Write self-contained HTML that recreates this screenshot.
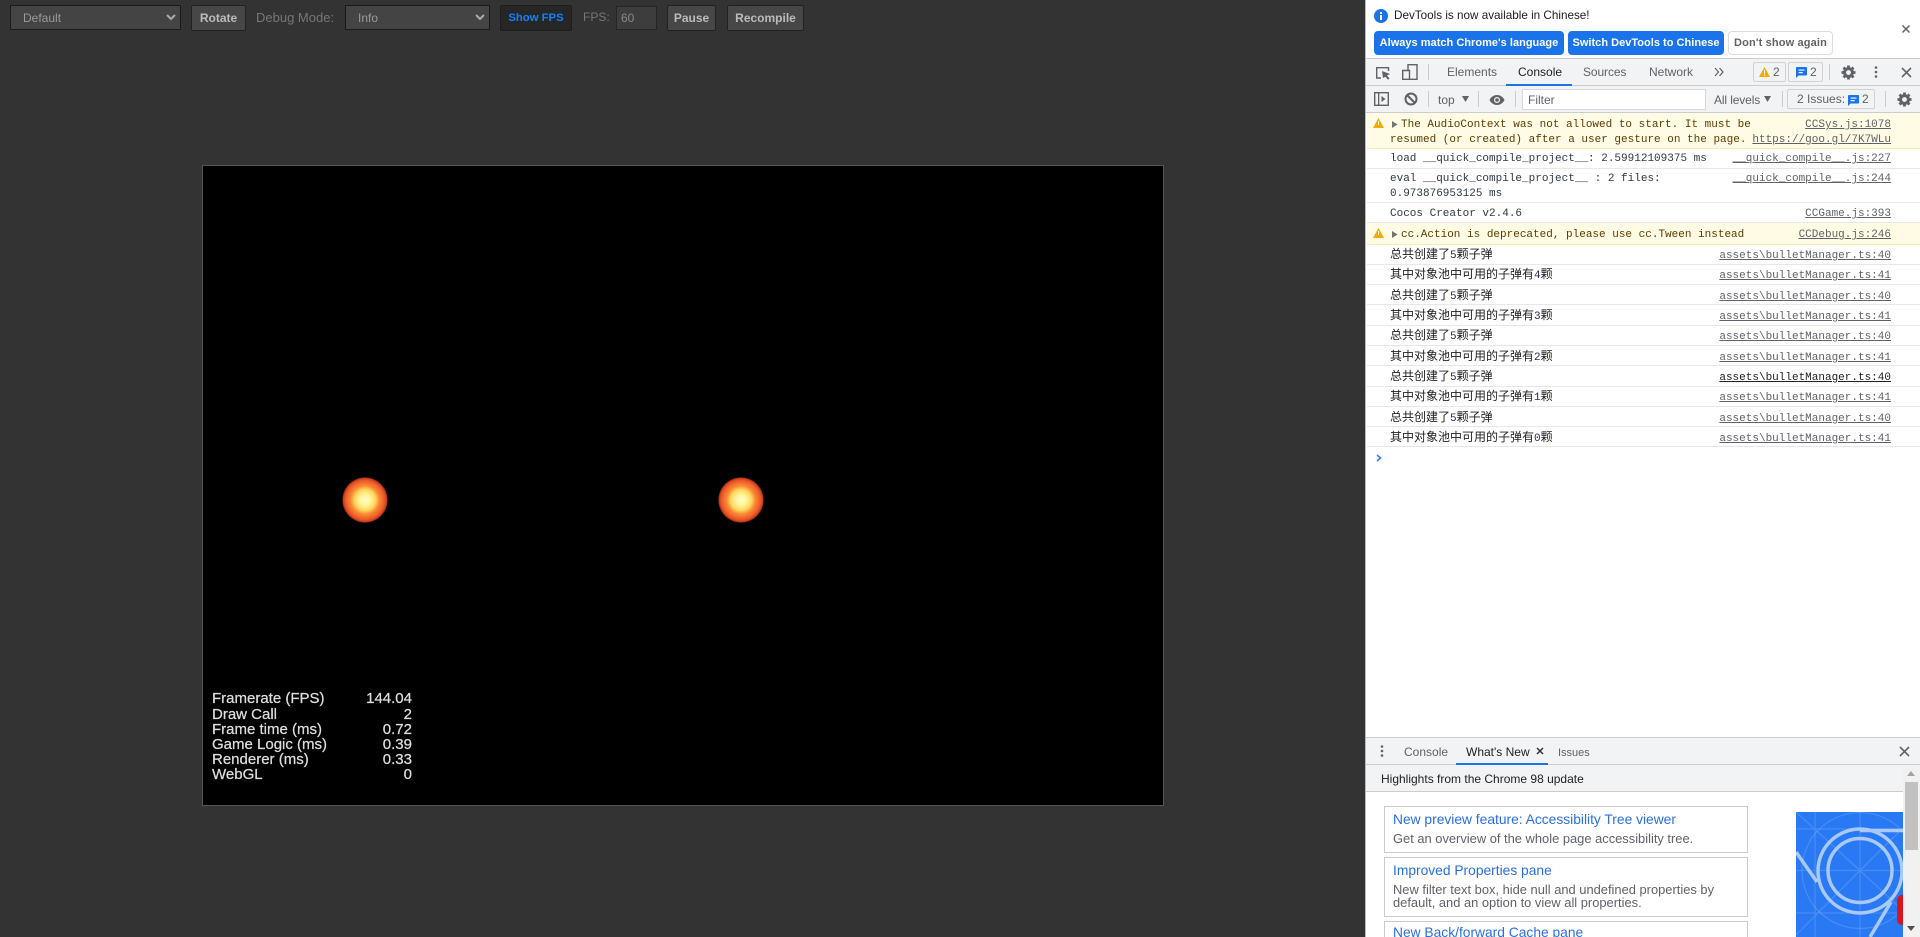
<!DOCTYPE html>
<html><head><meta charset="utf-8"><title>Cocos</title>
<style>
html,body{margin:0;padding:0;width:1920px;height:937px;overflow:hidden;background:#333}
*{box-sizing:border-box}
#w{position:relative;width:1920px;height:937px;overflow:hidden;background:#333}
.a{position:absolute;white-space:nowrap}
.tb{font-family:"Liberation Sans",sans-serif;font-size:13px;height:26px;line-height:25px;color:#999}
.sel{top:5px;height:25px;background:#444;border:1px solid #1a1a1a;color:#9a9a9a;padding-left:12px;line-height:24px;font-size:12px;font-family:"Liberation Sans",sans-serif}
.btn{top:5px;height:26px;background:#474747;border:1px solid #222;border-radius:2px;color:#bbb;font-weight:bold;text-align:center;line-height:24px;font-size:12px;font-family:"Liberation Sans",sans-serif}
.ui{font-family:"Liberation Sans",sans-serif;font-size:12px;color:#333}
.bb{font-size:11px;font-weight:bold;letter-spacing:.02px;text-align:center}
.row{left:1367px;width:553px;border-bottom:1px solid #e8e8e8;background:#fff}
.y{background:#fffbe5;border-bottom:1px solid #f5e9b8}
.m{font-family:"Liberation Mono","Noto Sans CJK SC",monospace;font-size:11px;color:#303942;line-height:14px}
.c{font-family:"Liberation Mono","Noto Sans CJK SC",monospace;font-size:12px;color:#222;line-height:14px}
.c span{font-size:11px;color:#2a2a55}
.l{font-family:"Liberation Mono",monospace;font-size:11px;color:#5f6368;text-decoration:underline;line-height:14px;right:29px}
.st{font-family:"Liberation Sans",sans-serif;font-size:15px;line-height:15px;color:#ddd;-webkit-text-stroke:.25px #ddd}
.v{left:300px;width:112px;text-align:right}
.card{left:1384px;width:364px;border:1px solid #c8ccd2;background:#fff}
.t{left:1393px;font-family:"Liberation Sans",sans-serif;font-size:13.8px;line-height:16px;color:#2a6fe0}
.d{left:1393px;font-family:"Liberation Sans",sans-serif;font-size:12.9px;line-height:14px;color:#5f6368}
.div{width:1px;background:#ccc}
.ball{width:46px;height:46px;top:477px;border-radius:50%;background:radial-gradient(circle closest-side at 50% 50%,#fffcc0 0,#fff6a0 22%,#ffd55a 46%,#fb8a33 62%,#ee5a2a 84%,#c63a1a 95%,#000 100%)}
</style></head><body><div id="w">

<div class="a sel" style="left:10px;width:171px">Default</div>
<svg class="a" style="left:165px;top:13px" width="12" height="10"><path d="M2 2l4 4 4-4" fill="none" stroke="#aaa" stroke-width="2"/></svg>
<div class="a btn" style="left:191px;width:55px">Rotate</div>
<div class="a tb" style="left:256px;top:5px;color:#777">Debug Mode:</div>
<div class="a sel" style="left:345px;width:145px">Info</div>
<svg class="a" style="left:474px;top:13px" width="12" height="10"><path d="M2 2l4 4 4-4" fill="none" stroke="#aaa" stroke-width="2"/></svg>
<div class="a btn" style="left:500px;width:72px;background:#262626;border-color:#1e1e1e;color:#0a84ff;font-size:11.3px">Show FPS</div>
<div class="a tb" style="left:583px;top:5px;color:#777;font-size:12px">FPS:</div>
<div class="a sel" style="left:616px;top:6px;height:24px;width:41px;padding-left:4px;background:#3d3d3d;border-color:#252525;color:#888;line-height:23px">60</div>
<div class="a btn" style="left:667px;width:49px">Pause</div>
<div class="a btn" style="left:727px;width:77px">Recompile</div>

<div class="a" style="left:202px;top:165px;width:962px;height:641px;background:#000;border:1px solid #555"></div>
<div class="a ball" style="left:342px"></div>
<div class="a ball" style="left:718px"></div>

<div class="a st" style="left:212px;top:691px">Framerate (FPS)</div><div class="a st v" style="top:691px">144.04</div>
<div class="a st" style="left:212px;top:707px">Draw Call</div><div class="a st v" style="top:707px">2</div>
<div class="a st" style="left:212px;top:722px">Frame time (ms)</div><div class="a st v" style="top:722px">0.72</div>
<div class="a st" style="left:212px;top:737px">Game Logic (ms)</div><div class="a st v" style="top:737px">0.39</div>
<div class="a st" style="left:212px;top:752px">Renderer (ms)</div><div class="a st v" style="top:752px">0.33</div>
<div class="a st" style="left:212px;top:767px">WebGL</div><div class="a st v" style="top:767px">0</div>

<div class="a" style="left:1365px;top:0;width:555px;height:937px;background:#fff;border-left:1px solid #bbb"></div>

<!-- infobar -->
<svg class="a" style="left:1374px;top:9px" width="14" height="14"><circle cx="7" cy="7" r="7" fill="#1a73e8"/><rect x="6" y="6" width="2" height="5" fill="#fff"/><rect x="6" y="3" width="2" height="2" fill="#fff"/></svg>
<div class="a ui" style="left:1394px;top:8px;line-height:15px;color:#202124;font-size:11.7px">DevTools is now available in Chinese!</div>
<div class="a ui bb" style="left:1374px;top:31px;width:190px;height:24px;background:#1a73e8;border-radius:4px;color:#fff;line-height:24px">Always match Chrome's language</div>
<div class="a ui bb" style="left:1568px;top:31px;width:156px;height:24px;background:#1a73e8;border-radius:4px;color:#fff;line-height:24px">Switch DevTools to Chinese</div>
<div class="a ui bb" style="left:1728px;top:31px;width:105px;height:24px;border:1px solid #dadce0;border-radius:4px;color:#5f6368;line-height:22px;letter-spacing:.15px">Don't show again</div>
<svg class="a" style="left:1901px;top:24px" width="10" height="10"><path d="M1.500 1.500l7 7M8.500 1.500l-7 7" stroke="#5f6368" stroke-width="1.500"/></svg>

<!-- main toolbar -->
<div class="a" style="left:1366px;top:58px;width:554px;height:28px;background:#f1f3f4;border-top:1px solid #cbcdd1;border-bottom:1px solid #cbcdd1"></div>
<svg class="a" style="left:1375px;top:65px" width="18" height="16"><path d="M6 13H1.700V2.700H13.500V6" fill="none" stroke="#5f6368" stroke-width="1.400"/><path d="M7 6l8 3-3 1.500 2.500 3-1.500 1.200-2.500-3L8 13z" fill="#5f6368"/></svg>
<svg class="a" style="left:1402px;top:64px" width="16" height="16"><path d="M6 6V.7h9v14.600H.7V6.500H7.500v8.800" fill="none" stroke="#5f6368" stroke-width="1.400"/></svg>
<div class="a div" style="left:1428px;top:64px;height:16px"></div>
<div class="a ui" style="left:1447px;top:64px;line-height:16px;color:#5f6368">Elements</div>
<div class="a ui" style="left:1518px;top:64px;line-height:16px;color:#202124">Console</div>
<div class="a" style="left:1506px;top:84px;width:66px;height:2px;background:#1a73e8"></div>
<div class="a ui" style="left:1583px;top:64px;line-height:16px;color:#5f6368;letter-spacing:-.1px">Sources</div>
<div class="a ui" style="left:1649px;top:64px;line-height:16px;color:#5f6368">Network</div>
<svg class="a" style="left:1714px;top:67px" width="10" height="10"><path d="M1 1l3.500 4L1 9M5.500 1L9 5 5.500 9" fill="none" stroke="#5f6368" stroke-width="1.200"/></svg>
<div class="a" style="left:1753px;top:62px;width:33px;height:20px;border:1px solid #d0d2d6;border-radius:2px"></div>
<svg class="a" style="left:1759px;top:67px" width="11" height="10"><path d="M5.500 0L11 10H0z" fill="#f2ab00"/><rect x="5" y="3" width="1.100" height="3.800" fill="#fff"/><rect x="5" y="7.500" width="1.100" height="1.200" fill="#fff"/></svg>
<div class="a ui" style="left:1773px;top:64px;line-height:16px;color:#5f6368">2</div>
<div class="a" style="left:1788px;top:62px;width:35px;height:20px;border:1px solid #d0d2d6;border-radius:2px"></div>
<svg class="a" style="left:1796px;top:67px" width="11" height="11" viewBox="0 0 13 13"><path d="M1 0h11a1 1 0 0 1 1 1v8a1 1 0 0 1-1 1H3l-3 3V1a1 1 0 0 1 1-1z" fill="#1a73e8"/><rect x="3" y="3" width="7" height="1.300" fill="#fff"/><rect x="3" y="6" width="5" height="1.300" fill="#fff"/></svg>
<div class="a ui" style="left:1810px;top:64px;line-height:16px;color:#5f6368">2</div>
<div class="a div" style="left:1829px;top:64px;height:16px"></div>
<svg class="a" style="left:1841px;top:65px" width="15" height="15" viewBox="0 0 16 16"><circle cx="8" cy="8" r="4.200" fill="none" stroke="#5f6368" stroke-width="3.200"/><path d="M8 .5V3M8 13v2.500M.5 8H3M13 8h2.500M2.700 2.700l1.800 1.800M11.500 11.500l1.800 1.800M13.300 2.700l-1.800 1.800M4.500 11.500l-1.800 1.800" stroke="#5f6368" stroke-width="3"/></svg>
<svg class="a" style="left:1874px;top:66px" width="4" height="12"><circle cx="2" cy="1.500" r="1.300" fill="#5f6368"/><circle cx="2" cy="6" r="1.300" fill="#5f6368"/><circle cx="2" cy="10.500" r="1.300" fill="#5f6368"/></svg>
<svg class="a" style="left:1901px;top:67px" width="11" height="11"><path d="M1 1l9 9M10 1L1 10" stroke="#5f6368" stroke-width="1.600"/></svg>

<!-- filter bar -->
<div class="a" style="left:1366px;top:86px;width:554px;height:27px;background:#f1f3f4;border-bottom:1px solid #cbcdd1"></div>
<svg class="a" style="left:1374px;top:92px" width="15" height="14"><rect x=".7" y=".7" width="13.600" height="12.600" fill="none" stroke="#5f6368" stroke-width="1.400"/><rect x="4" y="1" width="1.300" height="12" fill="#5f6368"/><path d="M7.500 4l4 3-4 3z" fill="#5f6368"/></svg>
<svg class="a" style="left:1404px;top:92px" width="14" height="14"><circle cx="7" cy="7" r="5.500" fill="none" stroke="#5f6368" stroke-width="2"/><path d="M3 3l8 8" stroke="#5f6368" stroke-width="2"/></svg>
<div class="a div" style="left:1428px;top:91px;height:16px"></div>
<div class="a ui" style="left:1438px;top:92px;line-height:16px;color:#5f6368">top</div>
<svg class="a" style="left:1462px;top:96px" width="7" height="6"><path d="M0 0h7L3.500 6z" fill="#5f6368"/></svg>
<div class="a div" style="left:1478px;top:91px;height:16px"></div>
<svg class="a" style="left:1489px;top:94px" width="16" height="12"><path d="M8 1C4.500 1 1.800 3.200.5 6c1.300 2.800 4 5 7.500 5s6.200-2.200 7.500-5C14.200 3.200 11.500 1 8 1z" fill="#5f6368"/><circle cx="8" cy="6" r="3" fill="#f1f3f4"/><circle cx="8" cy="6" r="1.800" fill="#5f6368"/></svg>
<div class="a div" style="left:1515px;top:91px;height:16px"></div>
<div class="a ui" style="left:1522px;top:89px;width:184px;height:21px;background:#fff;border:1px solid #d6d8db;padding-left:5px;line-height:20px;color:#5f6368">Filter</div>
<div class="a ui" style="left:1714px;top:92px;line-height:16px;color:#5f6368;letter-spacing:-.12px">All levels</div>
<svg class="a" style="left:1764px;top:96px" width="7" height="6"><path d="M0 0h7L3.500 6z" fill="#5f6368"/></svg>
<div class="a div" style="left:1782px;top:91px;height:16px"></div>
<div class="a" style="left:1787px;top:89px;width:88px;height:20px;border:1px solid #d0d2d6;border-radius:2px"></div>
<div class="a ui" style="left:1797px;top:91px;line-height:16px;color:#5f6368">2 Issues:</div>
<svg class="a" style="left:1848px;top:95px" width="11" height="11" viewBox="0 0 13 13"><path d="M1 0h11a1 1 0 0 1 1 1v8a1 1 0 0 1-1 1H3l-3 3V1a1 1 0 0 1 1-1z" fill="#1a73e8"/><rect x="3" y="3" width="7" height="1.300" fill="#fff"/><rect x="3" y="6" width="5" height="1.300" fill="#fff"/></svg>
<div class="a ui" style="left:1862px;top:91px;line-height:16px;color:#5f6368">2</div>
<div class="a div" style="left:1885px;top:91px;height:16px"></div>
<svg class="a" style="left:1897px;top:92px" width="15" height="15" viewBox="0 0 16 16"><circle cx="8" cy="8" r="4.200" fill="none" stroke="#5f6368" stroke-width="3.200"/><path d="M8 .5V3M8 13v2.500M.5 8H3M13 8h2.500M2.700 2.700l1.800 1.800M11.500 11.500l1.800 1.800M13.300 2.700l-1.800 1.800M4.500 11.500l-1.800 1.800" stroke="#5f6368" stroke-width="3"/></svg>

<!-- console rows -->
<div class="a row y" style="top:113px;height:36px"></div>
<svg class="a" style="left:1373px;top:118px" width="11" height="10"><path d="M5.500 0L11 10H0z" fill="#f2ab00"/><rect x="5" y="3" width="1" height="4" fill="#fff"/></svg>
<svg class="a" style="left:1392px;top:121px" width="6" height="7"><path d="M0 0l5.500 3.500L0 7z" fill="#727272"/></svg>
<div class="a m" style="left:1401px;top:118px;color:#5c3b00">The AudioContext was not allowed to start. It must be</div>
<div class="a m" style="left:1390px;top:133px;color:#5c3b00">resumed (or created) after a user gesture on the page.</div>
<div class="a l" style="top:118px">CCSys.js:1078</div>
<div class="a l" style="top:133px">https://goo.gl/7K7WLu</div>

<div class="a row" style="top:149px;height:20px"></div>
<div class="a m" style="left:1390px;top:152px">load __quick_compile_project__: 2.59912109375 ms</div>
<div class="a l" style="top:152px">__quick_compile__.js:227</div>

<div class="a row" style="top:169px;height:34px"></div>
<div class="a m" style="left:1390px;top:172px">eval __quick_compile_project__ : 2 files:</div>
<div class="a m" style="left:1390px;top:187px">0.973876953125 ms</div>
<div class="a l" style="top:172px">__quick_compile__.js:244</div>

<div class="a row" style="top:203px;height:20px"></div>
<div class="a m" style="left:1390px;top:207px">Cocos Creator v2.4.6</div>
<div class="a l" style="top:207px">CCGame.js:393</div>

<div class="a row y" style="top:223px;height:22px"></div>
<svg class="a" style="left:1373px;top:228px" width="11" height="10"><path d="M5.500 0L11 10H0z" fill="#f2ab00"/><rect x="5" y="3" width="1" height="4" fill="#fff"/></svg>
<svg class="a" style="left:1392px;top:231px" width="6" height="7"><path d="M0 0l5.500 3.500L0 7z" fill="#727272"/></svg>
<div class="a m" style="left:1401px;top:228px;color:#5c3b00">cc.Action is deprecated, please use cc.Tween instead</div>
<div class="a l" style="top:228px">CCDebug.js:246</div>

<div class="a row" style="top:245px;height:20px"></div><div class="a c" style="left:1390px;top:248px">总共创建了<span>5</span>颗子弹</div><div class="a l" style="top:249px">assets\bulletManager.ts:40</div>
<div class="a row" style="top:265px;height:20px"></div><div class="a c" style="left:1390px;top:268px">其中对象池中可用的子弹有<span>4</span>颗</div><div class="a l" style="top:269px">assets\bulletManager.ts:41</div>
<div class="a row" style="top:285px;height:20px"></div><div class="a c" style="left:1390px;top:289px">总共创建了<span>5</span>颗子弹</div><div class="a l" style="top:290px">assets\bulletManager.ts:40</div>
<div class="a row" style="top:305px;height:21px"></div><div class="a c" style="left:1390px;top:309px">其中对象池中可用的子弹有<span>3</span>颗</div><div class="a l" style="top:310px">assets\bulletManager.ts:41</div>
<div class="a row" style="top:326px;height:20px"></div><div class="a c" style="left:1390px;top:329px">总共创建了<span>5</span>颗子弹</div><div class="a l" style="top:330px">assets\bulletManager.ts:40</div>
<div class="a row" style="top:346px;height:20px"></div><div class="a c" style="left:1390px;top:350px">其中对象池中可用的子弹有<span>2</span>颗</div><div class="a l" style="top:351px">assets\bulletManager.ts:41</div>
<div class="a row" style="top:366px;height:21px"></div><div class="a c" style="left:1390px;top:370px">总共创建了<span>5</span>颗子弹</div><div class="a l" style="top:371px;color:#202124">assets\bulletManager.ts:40</div>
<div class="a row" style="top:387px;height:20px"></div><div class="a c" style="left:1390px;top:390px">其中对象池中可用的子弹有<span>1</span>颗</div><div class="a l" style="top:391px">assets\bulletManager.ts:41</div>
<div class="a row" style="top:407px;height:20px"></div><div class="a c" style="left:1390px;top:411px">总共创建了<span>5</span>颗子弹</div><div class="a l" style="top:412px">assets\bulletManager.ts:40</div>
<div class="a row" style="top:427px;height:20px"></div><div class="a c" style="left:1390px;top:431px">其中对象池中可用的子弹有<span>0</span>颗</div><div class="a l" style="top:432px">assets\bulletManager.ts:41</div>
<svg class="a" style="left:1376px;top:454px" width="6" height="8"><path d="M1 1l3.500 3L1 7" fill="none" stroke="#367cf1" stroke-width="1.600"/></svg>

<!-- drawer -->
<div class="a" style="left:1366px;top:737px;width:554px;height:28px;background:#f1f3f4;border-top:1px solid #cbcdd1;border-bottom:1px solid #cbcdd1"></div>
<svg class="a" style="left:1380px;top:745px" width="4" height="12"><circle cx="2" cy="1.500" r="1.300" fill="#5f6368"/><circle cx="2" cy="6" r="1.300" fill="#5f6368"/><circle cx="2" cy="10.500" r="1.300" fill="#5f6368"/></svg>
<div class="a ui" style="left:1404px;top:744px;line-height:16px;color:#5f6368">Console</div>
<div class="a ui" style="left:1466px;top:744px;line-height:16px;color:#202124">What's New</div>
<svg class="a" style="left:1536px;top:747px" width="8" height="8"><path d="M1 1l6 6M7 1L1 7" stroke="#333" stroke-width="1.500"/></svg>
<div class="a" style="left:1456px;top:763px;width:92px;height:2px;background:#1a73e8"></div>
<div class="a ui" style="left:1558px;top:745px;line-height:16px;color:#5f6368;font-size:11px">Issues</div>
<svg class="a" style="left:1899px;top:746px" width="11" height="11"><path d="M1 1l9 9M10 1L1 10" stroke="#5f6368" stroke-width="1.600"/></svg>

<div class="a" style="left:1366px;top:765px;width:554px;height:27px;background:#f1f3f4;border-bottom:1px solid #cbcdd1"></div>
<div class="a ui" style="left:1381px;top:771px;line-height:16px;color:#202124">Highlights from the Chrome 98 update</div>

<div class="a card" style="top:806px;height:47px"></div>
<div class="a t" style="top:812px">New preview feature: Accessibility Tree viewer</div>
<div class="a d" style="top:832px">Get an overview of the whole page accessibility tree.</div>
<div class="a card" style="top:857px;height:60px"></div>
<div class="a t" style="top:863px">Improved Properties pane</div>
<div class="a d" style="top:883px">New filter text box, hide null and undefined properties by</div>
<div class="a d" style="top:896px">default, and an option to view all properties.</div>
<div class="a card" style="top:921px;height:40px"></div>
<div class="a t" style="top:925px">New Back/forward Cache pane</div>

<svg class="a" style="left:1796px;top:812px" width="107" height="125" viewBox="0 0 107 125">
<rect width="107" height="125" fill="#2979f4"/>
<g stroke="#fff" fill="none" stroke-opacity=".14" stroke-width="1.300">
<path d="M0 17h107M0 101h107M0 58.500h107M19 0v125M64 0v125M0 0l64 58.500 43 40M0 123L64 58.500 107 16"/>
<circle cx="64" cy="58.500" r="58"/>
</g>
<g stroke="#a9c9fb" fill="none" stroke-width="3.500">
<circle cx="64" cy="58.500" r="32"/>
<circle cx="64" cy="59" r="42"/>
<path d="M64 18.500H107"/>
<path d="M0 40L21 70"/>
<path d="M95 90L74 125"/>
</g>
<rect x="101" y="83" width="10" height="30" rx="5" fill="#d8141c"/>
</svg>

<div class="a" style="left:1903px;top:767px;width:17px;height:170px;background:#f1f1f1"></div>
<div class="a" style="left:1905px;top:782px;width:13px;height:68px;background:#c1c1c1"></div>
<svg class="a" style="left:1907px;top:771px" width="8" height="5"><path d="M4 0l4 5H0z" fill="#a3a3a3"/></svg>
<svg class="a" style="left:1907px;top:926px" width="8" height="5"><path d="M0 0h8L4 5z" fill="#505050"/></svg>

</div></body></html>
